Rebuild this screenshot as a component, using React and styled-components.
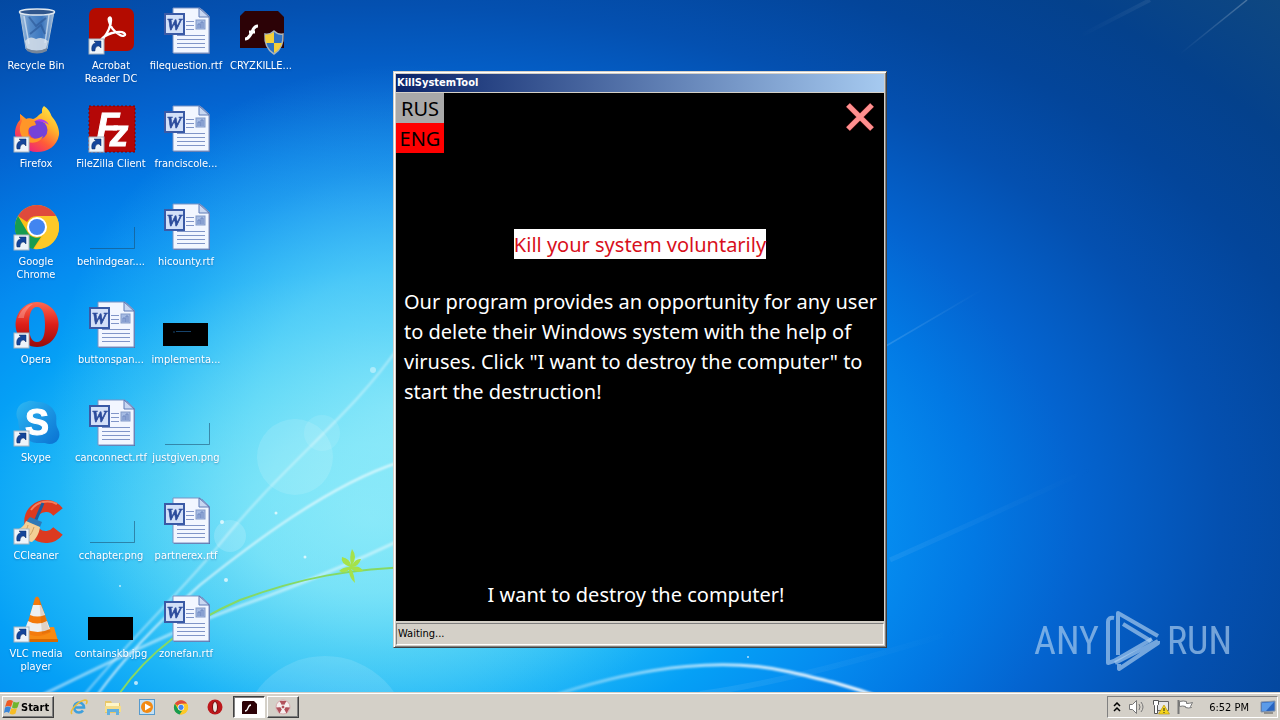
import React from "react";
import styled, { createGlobalStyle, css } from "styled-components";

const GlobalStyle = createGlobalStyle`
  * { box-sizing: border-box; }
  body {
    margin: 0;
    overflow: hidden;
    font-family: "DejaVu Sans Condensed", "Noto Sans", sans-serif;
    font-size: 11px;
    line-height: 13px;
  }
  button {
    margin: 0;
    padding: 0;
    border: 0;
    background: none;
    color: inherit;
    font: inherit;
    cursor: pointer;
  }
`;

const Screen = styled.div`
  position: relative;
  display: flex;
  flex-direction: column;
  height: 100vh;
  overflow: hidden;
  background:
    radial-gradient(
      27% 48% at 31% 57%,
      rgba(150, 236, 250, 0.7) 0%,
      rgba(130, 230, 248, 0.55) 40%,
      rgba(110, 215, 245, 0.25) 70%,
      rgba(90, 200, 240, 0) 100%
    ),
    radial-gradient(
      80% 86% at 29% 72%,
      #8cebfa 0%,
      #74e2f8 12%,
      #45cdf6 22%,
      #1eb6f7 31%,
      #05a0f6 40%,
      #058cf0 50%,
      #0279e4 59%,
      #0464d0 69%,
      #0450b0 83%,
      #03459a 96%,
      #04418c 108%,
      #10487f 124%
    );
`;

const Wallpaper = styled.svg`
  position: absolute;
  inset: 0;
  width: 100%;
  height: 100%;
`;

const Desktop = styled.main`
  position: relative;
  flex: 1;
  display: grid;
  grid-template-rows: repeat(7, 98px);
  grid-auto-flow: column;
  grid-auto-columns: 72px;
  column-gap: 3px;
  min-height: 0;
  padding-top: 8px;
`;

const IconButton = styled.button`
  display: flex;
  flex-direction: column;
  align-items: center;
  justify-content: flex-start;
  gap: 3px;
  color: #fff;
  text-align: center;
  text-shadow: 0 1px 2px rgba(0, 60, 130, 0.45);
`;

const IconArt = styled.svg`
  flex: none;
  width: 48px;
  height: 48px;
  overflow: visible;
`;

const Letter = styled.text`
  font-weight: 700;
  text-anchor: middle;
  text-shadow: none;
`;

const WindowLayer = styled.div`
  position: absolute;
  inset: 0;
  display: grid;
  place-items: center;
  padding-bottom: 1px;
  pointer-events: none;
`;

const Window = styled.section`
  display: flex;
  flex-direction: column;
  width: 494px;
  padding: 2px;
  border: 1px solid;
  border-color: #d4d0c8 #404040 #404040 #d4d0c8;
  background: #d4d0c8;
  box-shadow: inset 1px 1px 0 #fff, inset -1px -1px 0 #808080;
  pointer-events: auto;
`;

const TitleBar = styled.h1`
  margin: 0 0 1px;
  padding-left: 1px;
  background: linear-gradient(90deg, #0a246a, #a6caf0);
  color: #fff;
  font-size: 11px;
  font-weight: 700;
  line-height: 18px;
`;

const Client = styled.div`
  display: flex;
  flex-direction: column;
  align-items: center;
  min-height: 528px;
  padding-bottom: 11px;
  background: #000;
  color: #fff;
  font-family: "Noto Sans", "Open Sans", sans-serif;
  font-size: 20px;
  line-height: 30px;
`;

const ClientHead = styled.header`
  align-self: stretch;
  display: flex;
  align-items: flex-start;
  justify-content: space-between;
  margin-bottom: 76px;
`;

const Languages = styled.div`
  display: flex;
  flex-direction: column;
  width: 48px;
`;

const Language = styled.button`
  height: 30px;
  padding-top: 1px;
  background: ${(p) => (p.$active ? "#f00" : "#a9a9a9")};
  color: #000;
  line-height: 29px;
`;

const CloseButton = styled.button`
  display: flex;
  padding: 8px;
`;

const Headline = styled.h2`
  height: 30px;
  margin: 0 0 28px;
  padding-top: 1px;
  background: #fff;
  color: #d8101c;
  font-size: 20px;
  font-weight: 400;
`;

const Message = styled.p`
  align-self: stretch;
  margin: 0;
  padding-left: 8px;
`;

const DestroyButton = styled.button`
  margin: auto 8px 0 0;
`;

const StatusBar = styled.footer`
  margin-top: 2px;
  padding: 0 1px;
  border: 1px solid;
  border-color: #808080 #fff #fff #808080;
  line-height: 20px;
  color: #000;
`;

const Watermark = styled.div`
  position: absolute;
  right: 48px;
  bottom: 48px;
  display: flex;
  align-items: center;
  gap: 6px;
  color: rgba(175, 208, 240, 0.66);
  font-family: "Roboto Condensed", "Roboto", sans-serif;
  font-size: 38px;
  line-height: 62px;
`;

const Taskbar = styled.nav`
  position: relative;
  flex: none;
  display: flex;
  align-items: center;
  height: 28px;
  padding: 1px 2px 0;
  border-top: 1px solid #d4d0c8;
  box-shadow: inset 0 1px 0 #fff;
  background: #d4d0c8;
  color: #000;
`;

const raised = css`
  border: 1px solid;
  border-color: #fff #404040 #404040 #fff;
  box-shadow: inset -1px -1px 0 #808080;
`;

const sunken = css`
  border: 1px solid;
  border-color: #404040 #fff #fff #404040;
  box-shadow: inset 1px 1px 0 #808080;
`;

const StartButton = styled.button`
  ${raised}
  display: flex;
  align-items: center;
  gap: 1px;
  width: 52px;
  height: 22px;
  padding: 0 1px;
  font-size: 11px;
  font-weight: 700;
`;

const QuickLaunch = styled.div`
  display: flex;
  gap: 16px;
  margin: 0 9px 0 16px;
`;

const QuickButton = styled.button`
  display: flex;
`;

const TaskButton = styled.button`
  ${(p) => (p.$pressed ? sunken : raised)}
  display: grid;
  place-items: center;
  width: 32px;
  height: 22px;
  margin-right: 2px;
  background: ${(p) => (p.$pressed ? "#fff" : "#d4d0c8")};
`;

const SmallArt = styled.svg`
  flex: none;
  display: block;
  width: ${(p) => p.$size || 18}px;
  height: ${(p) => p.$size || 18}px;
`;

const Tray = styled.div`
  display: flex;
  align-items: center;
  gap: 6px;
  height: 22px;
  margin-left: auto;
  padding: 0 1px 0 4px;
  border: 1px solid;
  border-color: #808080 #fff #fff #808080;
`;

const Clock = styled.time`
  padding: 0 5px 0 9px;
`;

function Badge() {
  return (
    <g>
      <rect x="2" y="31" width="15" height="15" fill="#eef4fa" stroke="#a8b4c0" />
      <path d="M5 43c-1-5 1-8 4-8l-2-2h7v7l-2-2c-3 0-4 2-4 5z" fill="#14459a" stroke="#0b2d66" strokeWidth="0.5" />
    </g>
  );
}

function RecycleArt() {
  return (
    <g>
      <defs>
        <linearGradient id="bin" x1="0" x2="1">
          <stop offset="0" stopColor="#b9cfe4" stopOpacity="0.9" />
          <stop offset="0.3" stopColor="#6b9bd0" stopOpacity="0.8" />
          <stop offset="0.65" stopColor="#4a80c2" stopOpacity="0.8" />
          <stop offset="1" stopColor="#b8cce0" stopOpacity="0.9" />
        </linearGradient>
      </defs>
      <path d="M8 4l6 37q11 5 21 0l7-37z" fill="url(#bin)" stroke="#a9bfd4" />
      <path d="M13 33q5-6 11-2 6-3 12 2l-2 8q-10 4-19 0z" fill="#d9e2ea" opacity="0.85" />
      <path d="M14 40q11 5 21 0v3q-10 5-20 0z" fill="#77869a" />
      <path d="M12 8l5 28M37 7l-4 28" stroke="#dce9f5" strokeWidth="1.5" opacity="0.7" />
      <path d="M17 9l7 9 10-8M18 26l11-9 4 9" stroke="#2a5594" strokeWidth="2" fill="none" opacity="0.6" />
      <ellipse cx="25" cy="4" rx="17.5" ry="3" fill="#30568c" stroke="#dfe8f0" strokeWidth="1.5" />
    </g>
  );
}

function AcrobatArt() {
  return (
    <g>
      <rect x="2" y="0" width="45" height="43" rx="7" fill="#b30b00" />
      <path
        d="M13 33c3-4 8-7 12-8s9-2 12 0-1 4-4 2c-6-3-10-9-11-14-1-4 2-5 2-1 0 7-5 15-8 19s-5 4-3 2z"
        fill="none"
        stroke="#fff"
        strokeWidth="2.4"
        strokeLinejoin="round"
      />
      <Badge />
    </g>
  );
}

function WordArt() {
  return (
    <g>
      <path d="M12 1h28l8 8v37H12z" fill="#5872ab" />
      <path d="M11 0h27l9 8v37H11z" fill="#f2f6ff" stroke="#7a93c4" />
      <path d="M37 0v9h10z" fill="#c9d7f1" stroke="#5f7ab5" />
      <path d="M24 13.500h8M24 17.500h8M24 21.500h8M15 27.500h28M15 31.500h28M15 35.500h28M15 39.500h28" stroke="#8095c8" />
      <rect x="34" y="12" width="9" height="9" fill="#a6bbe3" stroke="#8299c8" />
      <path d="M36 20v-4h2v4M39 20v-6h2v6" stroke="#6c86bf" fill="none" />
      <rect x="3" y="6" width="19" height="20" fill="#d3e0f8" stroke="#3a5aa6" strokeWidth="2" />
      <Letter x="12" y="22" fontFamily="Liberation Serif, serif" fontSize="17" fontStyle="italic" fill="#2c4c9c" stroke="#2c4c9c" strokeWidth="0.6">W</Letter>
    </g>
  );
}

function FlashArt() {
  return (
    <g>
      <path d="M8 3h33l6 6v31H3V8z" fill="#2c0206" />
      <path d="M21 18c-5 0-5 5-7 8s-3 5-6 5M12 24h6" stroke="#fff" strokeWidth="3" fill="none" />
      <path d="M37 23q4 4 9 3 1 14-9 20-10-6-9-20 5 1 9-3z" fill="#2f72c4" stroke="#a7b4be" strokeWidth="1.5" />
      <path d="M37 24v11h-8q-1-4-1-8 5 0 9-3zM37 35h8q-2 7-8 10z" fill="#f5cf3a" />
    </g>
  );
}

function FirefoxArt() {
  return (
    <g>
      <defs>
        <linearGradient id="fox" x1="0.9" y1="0" x2="0.2" y2="1">
          <stop offset="0" stopColor="#fff04a" />
          <stop offset="0.35" stopColor="#ffb52c" />
          <stop offset="0.65" stopColor="#ff5c38" />
          <stop offset="1" stopColor="#e9168c" />
        </linearGradient>
      </defs>
      <path d="M32 0c8 6 6 9 9 12s7 12 6 17c-2 11-11 17-22 17S4 38 3 28c0-6 2-11 5-14l0-6 6 5c2-1 5-1 7 0 4-1 6-5 9-6 0-4 0-5 2-7z" fill="url(#fox)" />
      <circle cx="26" cy="24" r="9.500" fill="#7542d8" />
      <path d="M8 8l6 5c4-1 7 0 9 3l1 3c-4 1-8 2-8 7 0 8 9 8 15 4-3 8-15 9-20 2S8 19 10 15z" fill="#ff9628" />
      <path d="M23 15c5-4 12-1 14 4-4-3-8-4-14-4z" fill="#b13af0" />
      <Badge />
    </g>
  );
}

function FileZillaArt() {
  return (
    <g>
      <rect x="2" y="0" width="46" height="46" fill="#b40707" stroke="#800000" strokeDasharray="2 2" />
      <Letter x="21" y="33" fontFamily="Liberation Sans, sans-serif" fontSize="37" fontStyle="italic" fill="#fff" stroke="#fff">F</Letter>
      <Letter x="32" y="40" fontFamily="Liberation Sans, sans-serif" fontSize="37" fontStyle="italic" fill="#fff" stroke="#fff">z</Letter>
      <Badge />
    </g>
  );
}

function ChromeMark() {
  return (
    <g>
      <circle cx="25" cy="23" r="22" fill="#fbc116" />
      <path d="M6 12a22 22 0 0 1 38 0H25a11 11 0 0 0-10 6z" fill="#df4a3c" />
      <path d="M6 12l10 17a11 11 0 0 0 13 4L21 45A22 22 0 0 1 6 12z" fill="#169c50" />
      <path d="M44 12H25l9 6a11 11 0 0 1-1 11L22 45A22 22 0 0 0 44 12z" fill="#fdc928" />
      <circle cx="25" cy="23" r="10" fill="#fff" />
      <circle cx="25" cy="23" r="8" fill="#4285f0" />
    </g>
  );
}

function OperaArt() {
  return (
    <g>
      <defs>
        <linearGradient id="opera" x1="0" y1="0" x2="0" y2="1">
          <stop offset="0" stopColor="#ff6a52" />
          <stop offset="0.5" stopColor="#dd1f18" />
          <stop offset="1" stopColor="#960c0c" />
        </linearGradient>
      </defs>
      <path fillRule="evenodd" d="M25 0a21.500 22.500 0 1 0 .1 0zM25 5c6 0 8 8 8 18s-2 17-8 17-8-7-8-17 2-18 8-18z" fill="url(#opera)" />
      <path d="M6 16c3-9 10-14 15-14-6 4-9 10-9 14z" fill="#fff" opacity="0.25" />
      <Badge />
    </g>
  );
}

function SkypeArt() {
  return (
    <g>
      <defs>
        <linearGradient id="skype" x1="0" y1="0" x2="1" y2="1">
          <stop offset="0" stopColor="#2cb8f4" />
          <stop offset="1" stopColor="#0a72d2" />
        </linearGradient>
      </defs>
      <path d="M14 2c5-3 9 0 14 0 8 1 14 6 16 13 1 5-1 9 2 14 5 10-4 18-13 14-6 0-12 1-18-4C6 33 7 26 6 20 2 13 6 3 14 2z" fill="url(#skype)" />
      <Letter x="25" y="35" fontFamily="Liberation Sans, sans-serif" fontSize="36" fill="#fff" stroke="#fff">S</Letter>
      <Badge />
    </g>
  );
}

function CCleanerArt() {
  return (
    <g>
      <path d="M46 14a15.500 15.500 0 1 0 0 19" stroke="#dc3a20" strokeWidth="12" fill="none" />
      <path d="M45 6a20 20 0 0 0-26 6" stroke="#f6805c" strokeWidth="2" fill="none" />
      <path d="M31 5l-8 19" stroke="#1e5c9c" strokeWidth="3" />
      <path d="M18 19l12 5-2 5-14-5z" fill="#2f79b6" />
      <path d="M14 23l14 6c-1 7-4 12-8 15-6-1-12-6-17-12 6-1 9-4 11-9z" fill="#f3cf96" />
      <path d="M16 27c-1 5-4 8-8 9M22 29c-2 6-4 9-8 11" stroke="#cfa062" fill="none" />
      <Badge />
    </g>
  );
}

function VlcArt() {
  return (
    <g>
      <path d="M14 32l28-1 4 14H9z" fill="#f78a12" />
      <path d="M9 43h37v3H9z" fill="#d96a00" />
      <path d="M23 2q2-3 4 0l12 34q-14 8-26 0z" fill="#f47b0c" />
      <path d="M21 9h8l4 10q-8 3-15 0z" fill="#edf0f2" />
      <path d="M16 25q9 5 19 0l3 8q-12 6-25 0z" fill="#edf0f2" />
      <path d="M27 2l11 34q3 0 0 0L30 38z" fill="#a84b00" opacity="0.18" />
      <Badge />
    </g>
  );
}

function ClearThumb() {
  return <path d="M3 44.500h44.500V23" stroke="#1b4b6c" fill="none" opacity="0.55" />;
}

function DarkThumb({ line }) {
  return (
    <g>
      <rect x="1" y="21" width="45" height="23" fill="#000" />
      {line && <path d="M11 30h2M14 29.500h15" stroke="#17436b" />}
    </g>
  );
}

const icons = [
  { label: "Recycle Bin", Art: RecycleArt },
  { label: "Firefox", Art: FirefoxArt },
  { label: "Google Chrome", Art: () => <g><ChromeMark /><Badge /></g> },
  { label: "Opera", Art: OperaArt },
  { label: "Skype", Art: SkypeArt },
  { label: "CCleaner", Art: CCleanerArt },
  { label: "VLC media player", Art: VlcArt },
  { label: "Acrobat Reader DC", Art: AcrobatArt },
  { label: "FileZilla Client", Art: FileZillaArt },
  { label: "behindgear....", Art: ClearThumb },
  { label: "buttonspan...", Art: WordArt },
  { label: "canconnect.rtf", Art: WordArt },
  { label: "cchapter.png", Art: ClearThumb },
  { label: "containskb.jpg", Art: DarkThumb },
  { label: "filequestion.rtf", Art: WordArt },
  { label: "franciscole...", Art: WordArt },
  { label: "hicounty.rtf", Art: WordArt },
  { label: "implementa...", Art: () => <DarkThumb line /> },
  { label: "justgiven.png", Art: ClearThumb },
  { label: "partnerex.rtf", Art: WordArt },
  { label: "zonefan.rtf", Art: WordArt },
  { label: "CRYZKILLE...", Art: FlashArt },
];

function WallpaperArt() {
  return (
    <Wallpaper viewBox="0 0 1280 720" preserveAspectRatio="none" aria-hidden="true">
      <defs>
        <filter id="soft" x="-10%" y="-10%" width="120%" height="120%">
          <feGaussianBlur stdDeviation="1" />
        </filter>
        <linearGradient id="fade" x1="0" x2="1">
          <stop offset="0" stopColor="#fff" stopOpacity="0.5" />
          <stop offset="1" stopColor="#fff" stopOpacity="0" />
        </linearGradient>
        <linearGradient id="rise" x1="0" x2="1">
          <stop offset="0" stopColor="#fff" stopOpacity="0" />
          <stop offset="1" stopColor="#fff" stopOpacity="0.5" />
        </linearGradient>
        <linearGradient id="swell" x1="0" x2="1">
          <stop offset="0" stopColor="#fff" stopOpacity="0.3" />
          <stop offset="0.6" stopColor="#fff" stopOpacity="0.8" />
          <stop offset="1" stopColor="#fff" />
        </linearGradient>
      </defs>
      <g fill="#fff">
        <circle cx="295" cy="457" r="38" opacity="0.12" />
        <circle cx="322" cy="433" r="18" opacity="0.1" />
        <circle cx="230" cy="536" r="16" opacity="0.16" />
        <circle cx="325" cy="740" r="84" opacity="0.12" />
      </g>
      <g fill="none" stroke="#fff" strokeLinecap="round" filter="url(#soft)">
        <path d="M400 345C350 418 285 462 215 550C180 592 130 640 85 694" strokeWidth="2" opacity="0.45" />
        <path d="M400 462C330 484 250 545 200 585C165 616 130 650 98 694" strokeWidth="2" opacity="0.75" />
        <path d="M440 520C380 552 300 585 240 606C170 632 110 662 44 694" strokeWidth="3" opacity="0.5" />
        <path d="M558 694C650 664 730 658 790 672C825 680 850 686 882 698" stroke="url(#swell)" strokeWidth="3" />
      </g>
      <g fill="none">
        <path d="M886 346L985 288" stroke="url(#fade)" strokeWidth="1.500" opacity="0.3" />
        <path d="M890 560Q980 520 1095 467" stroke="url(#fade)" strokeWidth="5" opacity="0.14" />
        <path d="M1180 54L1247 0" stroke="url(#rise)" strokeWidth="1.500" opacity="0.5" />
        <path d="M1080 36L1150 0" stroke="url(#rise)" strokeWidth="4" opacity="0.14" />
        <path d="M700 694Q800 680 960 630" stroke="url(#fade)" strokeWidth="6" opacity="0.18" />
      </g>
      <path d="M119 694C150 650 190 622 240 600C300 578 350 568 420 567" fill="none" stroke="#86d964" strokeWidth="2" />
      <path d="M350 567q-10-4-8-10 8 2 9 8-2-8 1-16 6 8 0 16 4-7 9-6-2 7-9 8 8-2 11 4-7 2-12-2 3 4 4 14-6-5-6-13-5 4-10 1 4-4 11-4z" fill="#a5e24a" />
      <g fill="#fff" opacity="0.7">
        <circle cx="222" cy="522" r="2" />
        <circle cx="276" cy="513" r="1.500" />
        <circle cx="226" cy="580" r="2" />
        <circle cx="305" cy="557" r="1.500" />
        <circle cx="136" cy="683" r="2" />
        <circle cx="120" cy="586" r="1" />
        <circle cx="373" cy="370" r="3" opacity="0.6" />
        <circle cx="748" cy="657" r="1" />
      </g>
    </Wallpaper>
  );
}

function StartFlag() {
  return (
    <SmallArt viewBox="0 0 16 16" $size={16} aria-hidden="true">
      <path d="M3 2q3-2 6 0L7 8Q4 6 1 8z" fill="#ee5a24" />
      <path d="M9.500 2.500q3 2 6 0l-2 6q-3 2-5.500 0z" fill="#6fb52e" />
      <path d="M1 8.500q3-2 6 0L5 14q-2-2-5 0z" fill="#3a86d8" />
      <path d="M7.500 9q3 2 5.500 0l-1.500 5.500q-3 2-6 0z" fill="#f7bd25" />
    </SmallArt>
  );
}

const quickLaunch = [
  {
    name: "Internet Explorer",
    art: (
      <g fill="none">
        <path d="M4.500 9.500h9.500a5 5 0 1 0-1 3" stroke="#3d9fdc" strokeWidth="2.600" />
        <path d="M2 16C-1 13 8 3 15 2c3 0 2 3 1 4" stroke="#edbd38" strokeWidth="1.600" />
      </g>
    ),
  },
  {
    name: "Windows Explorer",
    art: (
      <g>
        <path d="M1 3h6l1 2h8v10H1z" fill="#e8c768" />
        <path d="M2 5h13v5H2z" fill="#fff6c9" />
        <path d="M1 8h16v6H1z" fill="#f5dd8b" />
        <path d="M3 17v-6h12v6h-3v-3H6v3z" fill="#62b0df" />
      </g>
    ),
  },
  {
    name: "Media Player",
    art: (
      <g>
        <rect x="1.500" y="1.500" width="15" height="15" fill="#c4e0f4" stroke="#569acd" />
        <circle cx="9" cy="9" r="6" fill="#f28a14" />
        <path d="M7 5.500l6 3.500-6 3.500z" fill="#fff" />
      </g>
    ),
  },
  { name: "Google Chrome", art: <g transform="translate(1 2) scale(.32)"><ChromeMark /></g> },
  {
    name: "Opera",
    art: (
      <g>
        <circle cx="9" cy="9" r="7.500" fill="#bd171b" />
        <ellipse cx="9" cy="9" rx="2.500" ry="5.500" fill="#ece7e1" stroke="#75090b" />
      </g>
    ),
  },
];

export default function App() {
  return (
    <Screen>
      <GlobalStyle />
      <WallpaperArt />
      <Desktop>
        {icons.map(({ label, Art }) => (
          <IconButton key={label} type="button">
            <IconArt viewBox="0 0 48 48" aria-hidden="true"><Art /></IconArt>
            <span>{label}</span>
          </IconButton>
        ))}
      </Desktop>

      <Watermark>
        <span>ANY</span>
        <svg width="56" height="62" viewBox="0 0 56 62" fill="none" stroke="currentColor" strokeWidth="4" strokeLinejoin="round" aria-label="play">
          <path d="M9 8Q3 7 3 12v41l6-2 38-22" />
          <path d="M13 45V3L53 26M18 14l28 17" />
          <path d="M10 53l43-22M53 31v2L14 59v-5" />
        </svg>
        <span>RUN</span>
      </Watermark>

      <WindowLayer>
        <Window aria-label="KillSystemTool">
          <TitleBar>KillSystemTool</TitleBar>
          <Client>
            <ClientHead>
              <Languages>
                <Language type="button">RUS</Language>
                <Language type="button" $active>ENG</Language>
              </Languages>
              <CloseButton type="button" aria-label="Close">
                <svg width="32" height="32" viewBox="0 0 32 32" aria-hidden="true">
                  <path d="M4 4l24 24M28 4L4 28" stroke="#5c1010" strokeWidth="6" />
                  <path d="M4 4l24 24M28 4L4 28" stroke="#ff9090" strokeWidth="5" />
                </svg>
              </CloseButton>
            </ClientHead>
            <Headline>Kill your system voluntarily</Headline>
            <Message>
              Our program provides an opportunity for any user to delete their Windows system with the
              help of viruses. Click "I want to destroy the computer" to start the destruction!
            </Message>
            <DestroyButton type="button">I want to destroy the computer!</DestroyButton>
          </Client>
          <StatusBar>Waiting...</StatusBar>
        </Window>
      </WindowLayer>

      <Taskbar>
        <StartButton type="button"><StartFlag />Start</StartButton>
        <QuickLaunch>
          {quickLaunch.map(({ name, art }) => (
            <QuickButton key={name} type="button" aria-label={name}>
              <SmallArt viewBox="0 0 18 18" aria-hidden="true">{art}</SmallArt>
            </QuickButton>
          ))}
        </QuickLaunch>
        <TaskButton type="button" $pressed aria-label="Flash">
          <SmallArt viewBox="0 0 16 16" $size={16} aria-hidden="true">
            <path d="M2 2h11l3 3v10H1V3z" fill="#2d0207" />
            <path d="M10 6q-2 0-3 3t-3 3" stroke="#fff" strokeWidth="1.300" fill="none" />
          </SmallArt>
        </TaskButton>
        <TaskButton type="button" aria-label="KillSystemTool">
          <SmallArt viewBox="0 0 16 16" $size={16} aria-hidden="true">
            <circle cx="8" cy="8" r="7" fill="#f5eeee" stroke="#d7a9ad" />
            <g fill="#b2505a">
              <path d="M8 8L4.500 2h7z" />
              <path d="M8 8l7 .5-3.500 6z" />
              <path d="M8 8l-7 .5 3.500 6z" />
            </g>
            <circle cx="8" cy="8" r="2" fill="#b2505a" stroke="#fff" />
          </SmallArt>
        </TaskButton>
        <Tray>
          <SmallArt viewBox="0 0 10 10" $size={10} aria-hidden="true">
            <path d="M2 4l3-3 3 3M2 9l3-3 3 3" stroke="#000" strokeWidth="1.500" fill="none" />
          </SmallArt>
          <SmallArt viewBox="0 0 18 18" aria-hidden="true">
            <path d="M1.500 6.500h3l4-4v13l-4-4h-3z" fill="#fff" stroke="#777" />
            <path d="M11 6q2 3 0 6M13 4q4 5 0 10" stroke="#777" fill="none" />
          </SmallArt>
          <SmallArt viewBox="0 0 18 18" aria-hidden="true">
            <path d="M5.500 3.500h11v9h-11z" fill="#e8e8e8" stroke="#666" />
            <path d="M1.500 2.500h5v4l-1 1v8h-3v-8l-1-1z" fill="#fff" stroke="#555" />
            <path d="M12 7l5.500 9h-11z" fill="#f5d51c" stroke="#b48e00" strokeWidth=".6" />
            <path d="M12 10v3M12 14v1" stroke="#222" />
          </SmallArt>
          <SmallArt viewBox="0 0 18 18" aria-hidden="true">
            <path d="M2.500 2v14" stroke="#777" strokeWidth="2" />
            <path d="M3.500 3.500q4-1 7 0v2q3 0 6-1l-2 4 1 1q-3 1-6 0v-1q-3-1-6 0z" fill="#fff" stroke="#777" />
          </SmallArt>
          <Clock>6:52 PM</Clock>
          <SmallArt viewBox="0 0 16 16" $size={16} aria-label="Show desktop">
            <path d="M1 3l14-1v10L1 13z" fill="#2864c0" stroke="#8a97a8" />
            <path d="M2 4l12-1-8 9H2z" fill="#5b9be8" />
            <path d="M4 14h9" stroke="#555" />
          </SmallArt>
        </Tray>
      </Taskbar>
    </Screen>
  );
}
